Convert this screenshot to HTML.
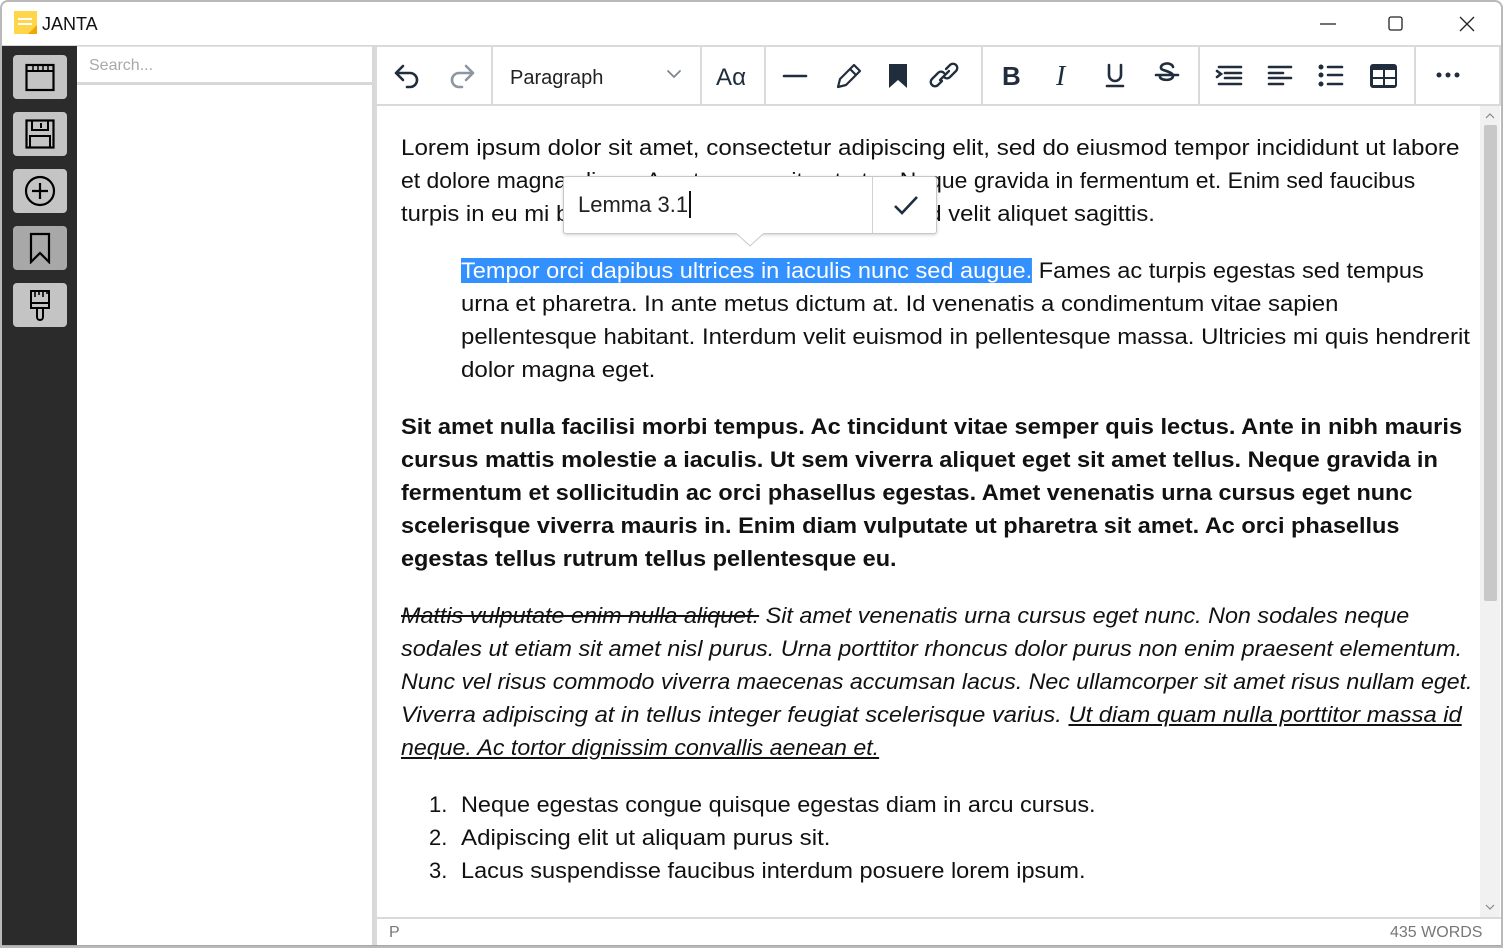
<!DOCTYPE html>
<html><head><meta charset="utf-8">
<style>
*{margin:0;padding:0;box-sizing:border-box}
html,body{width:1503px;height:948px;overflow:hidden;background:#fff;font-family:"Liberation Sans",sans-serif}
.win{position:absolute;left:0;top:0;width:1503px;height:948px;overflow:hidden;background:#fff}
.frame{position:absolute;left:0;top:0;width:1503px;height:948px;border:2px solid #b9b9b9;border-radius:8px 8px 0 0;pointer-events:none}
.abs{position:absolute}
.side{left:0;top:44px;width:77px;height:904px;background:#2b2b2b}
.sbtn{position:absolute;left:13px;width:54px;height:44px;background:#c4c4c4;border-radius:4px;display:flex;align-items:center;justify-content:center}
.search{left:77px;top:44px;width:298px;height:904px;background:#fff;border-right:3px solid #d8d8d8}
.edit{left:375px;top:45px;width:1126px;height:903px}
.tb{position:absolute;top:0;height:61px;border-left:2px solid #dadada;border-top:2px solid #dadada;border-bottom:2px solid #dadada}
.ln{position:absolute;white-space:nowrap;font-size:22px;line-height:33px;height:33px;color:#111;transform-origin:0 50%}
.b{font-weight:bold}.i{font-style:italic}
svg{display:block}
</style></head><body><div class="win">
<div class="abs" style="left:14px;top:11px;width:24px;height:24px">
<svg width="24" height="24"><rect x="0" y="0" width="23" height="23" fill="#ffd54a"/><polygon points="14,23 23,14 23,23" fill="#f0a800"/><rect x="4" y="7" width="14" height="2" fill="#fff"/><rect x="4" y="12" width="14" height="2" fill="#fff"/></svg></div>
<div class="abs" style="left:42px;top:14px;font-size:18px;color:#111">JANTA</div>
<svg class="abs" style="left:1318px;top:15px" width="170" height="20"><line x1="2" y1="9" x2="18" y2="9" stroke="#222" stroke-width="1.3"/><rect x="71" y="2" width="13" height="13" rx="2" fill="none" stroke="#222" stroke-width="1.3"/><path d="M142 2 L156 16 M156 2 L142 16" stroke="#222" stroke-width="1.3"/></svg>
<div class="abs" style="left:0;top:45px;width:1503px;height:1px;background:#d6d6d6"></div>
<div class="abs side" style="top:46px">
<div class="sbtn" style="top:9px"><svg width="30" height="30"><rect x="1.5" y="3" width="27" height="25" fill="none" stroke="#000" stroke-width="2.2"/><line x1="1.5" y1="9" x2="28.5" y2="9" stroke="#000" stroke-width="2"/><path d="M8 4v4M13 4v4M18 4v4M23 4v4" stroke="#000" stroke-width="1.5"/></svg></div>
<div class="sbtn" style="top:66px"><svg width="30" height="30"><rect x="1.5" y="1.5" width="27" height="27" fill="none" stroke="#000" stroke-width="2.2"/><path d="M7 2v9h16V2M16 4v5" fill="none" stroke="#000" stroke-width="2"/><path d="M5 28V17h20v11" fill="none" stroke="#000" stroke-width="2"/></svg></div>
<div class="sbtn" style="top:123px"><svg width="32" height="32"><circle cx="16" cy="16" r="14" fill="none" stroke="#000" stroke-width="2.2"/><path d="M16 8v16M8 16h16" stroke="#000" stroke-width="2.2"/></svg></div>
<div class="sbtn" style="top:180px;background:#a8a8a8"><svg width="30" height="32"><path d="M6 2h18v28l-9-9-9 9z" fill="none" stroke="#000" stroke-width="2.2"/></svg></div>
<div class="sbtn" style="top:237px"><svg width="30" height="32"><path d="M6 2h18v12H6z M6 14v5h18v-5 M12 19v9a3 3 0 0 0 6 0v-9" fill="none" stroke="#000" stroke-width="2"/><path d="M10 2v6M14 2v4M18 2v6M22 2v3" stroke="#000" stroke-width="1.6"/></svg></div>
</div>
<div class="abs search" style="top:46px">
<div class="abs" style="left:0;top:0;width:295px;height:39px;border-bottom:3px solid #d8d8d8;border-top:1px solid #e4e4e4"></div>
<div class="abs" style="left:12px;top:11px;font-size:16px;color:#a9a9a9">Search...</div>
</div>
<div class="abs edit">
<div class="tb" style="left:0;width:117px"></div>
<div class="tb" style="left:116px;width:210px"></div>
<div class="tb" style="left:325px;width:66px"></div>
<div class="tb" style="left:389px;width:218px"></div>
<div class="tb" style="left:606px;width:218px"></div>
<div class="tb" style="left:823px;width:217px"></div>
<div class="tb" style="left:1039px;width:87px;border-right:2px solid #dadada"></div>
<svg class="abs" style="left:0;top:0" width="1126" height="62">
<g fill="none" stroke="#1f2d3d" stroke-width="2.6" stroke-linecap="round" stroke-linejoin="round">
<path d="M28 21l-7 7 7 7M21 28h14a7 7 0 0 1 0 14h-3"/>
<path stroke="#8b96a0" d="M91 21l7 7-7 7M98 28H84a7 7 0 0 0 0 14h3"/>
<path stroke="#7d8790" stroke-width="1.8" d="M293 26l6 6 6-6"/>
<path d="M409 31h22"/>
<path stroke-width="2.2" d="M463 42l2-8 14-14 6 6-14 14zM475 24l6 6"/>
<path stroke-width="2.3" d="M567 36l-4 4a4 4 0 0 1-6-6l6-6a4 4 0 0 1 6 0M571 24l4-4a4 4 0 0 1 6 6l-6 6a4 4 0 0 1-6 0M565 35l9-9"/>
</g>
<path d="M514 19h18v24l-9-8-9 8z" fill="#1f2d3d"/>
<text x="135" y="39" font-family="Liberation Sans" font-size="20" fill="#222">Paragraph</text>
<text x="341" y="40" font-family="Liberation Sans" font-size="24" fill="#1f2d3d" textLength="30" lengthAdjust="spacingAndGlyphs">Aα</text>
<text x="627" y="40" font-family="Liberation Sans" font-size="26" font-weight="bold" fill="#1f2d3d">B</text>
<text x="681" y="40" font-family="Liberation Serif" font-size="28" font-style="italic" fill="#1f2d3d">I</text>
<g fill="none" stroke="#1f2d3d" stroke-width="2.6" stroke-linecap="round">
<path d="M734 20v10a6 6 0 0 0 12 0v-10M732 41h16"/>
<path d="M781 30h22M798 22a6 4 0 0 0-12 1c0 3 12 3 12 8s-12 5-13 1"/>
<path d="M844 22h22M850 28h16M850 33h16M844 39h22M842 26l4 3-4 3"/>
<path d="M894 22h22M894 28h14M894 33h22M894 39h14"/>
<path d="M953 22h14M953 30h14M953 39h14"/>
</g>
<g fill="#1f2d3d"><circle cx="946" cy="22" r="2.5"/><circle cx="946" cy="30" r="2.5"/><circle cx="946" cy="39" r="2.5"/>
<rect x="995" y="19" width="27" height="24" rx="3"/>
<circle cx="1064" cy="30" r="2.5"/><circle cx="1073" cy="30" r="2.5"/><circle cx="1082" cy="30" r="2.5"/></g>
<g fill="#fff"><rect x="998" y="25" width="10" height="7"/><rect x="1010" y="25" width="10" height="7"/><rect x="998" y="34" width="10" height="6"/><rect x="1010" y="34" width="10" height="6"/></g>
</svg>
<div class="abs" style="left:1105px;top:61px;width:20px;height:812px;background:#f1f1f1"></div>
<div class="abs" style="left:1109px;top:80px;width:13px;height:476px;background:#c8c8c8;border-radius:2px"></div>
<svg class="abs" style="left:1105px;top:61px" width="20" height="812"><path d="M6 12l4-4 4 4" fill="none" stroke="#888" stroke-width="1.2"/><path d="M6 799l4 4 4-4" fill="none" stroke="#888" stroke-width="1.2"/></svg>
<div class="abs" style="left:0;top:872px;width:1126px;height:2px;background:#dadada"></div>
<div class="abs" style="left:0;top:61px;width:2px;height:842px;background:#dadada"></div>
<div class="abs" style="left:14px;top:879px;font-size:16px;color:#777">P</div>
<div class="abs" style="left:1015px;top:879px;font-size:16px;color:#777">435 WORDS</div>
</div>
<div class="abs" style="left:0;top:945px;width:1503px;height:3px;background:#a8a8a8"></div>

<div id="txt">
<div class="ln" style="left:401px;top:131px" w="1058">Lorem ipsum dolor sit amet, consectetur adipiscing elit, sed do eiusmod tempor incididunt ut labore</div>
<div class="ln" style="left:401px;top:164px" w="1014">et dolore magna aliqua. Amet massa vitae tortor. Neque gravida in fermentum et. Enim sed faucibus</div>
<div class="ln" style="left:401px;top:197px" w="754">turpis in eu mi bibendum neque egestas congue. Id velit aliquet sagittis.</div>
<div class="ln" style="left:461px;top:254px" w="963"><span style="background:#3391ff;color:#fff">Tempor orci dapibus ultrices in iaculis nunc sed augue.</span> Fames ac turpis egestas sed tempus</div>
<div class="ln" style="left:461px;top:287px" w="877">urna et pharetra. In ante metus dictum at. Id venenatis a condimentum vitae sapien</div>
<div class="ln" style="left:461px;top:320px" w="1009">pellentesque habitant. Interdum velit euismod in pellentesque massa. Ultricies mi quis hendrerit</div>
<div class="ln" style="left:461px;top:353px" w="194">dolor magna eget.</div>
<div class="ln b" style="left:401px;top:410px" w="1061">Sit amet nulla facilisi morbi tempus. Ac tincidunt vitae semper quis lectus. Ante in nibh mauris</div>
<div class="ln b" style="left:401px;top:443px" w="1037">cursus mattis molestie a iaculis. Ut sem viverra aliquet eget sit amet tellus. Neque gravida in</div>
<div class="ln b" style="left:401px;top:476px" w="1011">fermentum et sollicitudin ac orci phasellus egestas. Amet venenatis urna cursus eget nunc</div>
<div class="ln b" style="left:401px;top:509px" w="999">scelerisque viverra mauris in. Enim diam vulputate ut pharetra sit amet. Ac orci phasellus</div>
<div class="ln b" style="left:401px;top:542px" w="496">egestas tellus rutrum tellus pellentesque eu.</div>
<div class="ln i" style="left:401px;top:599px" w="1008"><s>Mattis vulputate enim nulla aliquet.</s> Sit amet venenatis urna cursus eget nunc. Non sodales neque</div>
<div class="ln i" style="left:401px;top:632px" w="1061">sodales ut etiam sit amet nisl purus. Urna porttitor rhoncus dolor purus non enim praesent elementum.</div>
<div class="ln i" style="left:401px;top:665px" w="1072">Nunc vel risus commodo viverra maecenas accumsan lacus. Nec ullamcorper sit amet risus nullam eget.</div>
<div class="ln i" style="left:401px;top:698px" w="1061">Viverra adipiscing at in tellus integer feugiat scelerisque varius. <u>Ut diam quam nulla porttitor massa id </u></div>
<div class="ln i" style="left:401px;top:731px" w="478"><u>neque. Ac tortor dignissim convallis aenean et.</u></div>
<div class="ln" style="left:429px;top:788px">1.</div>
<div class="ln" style="left:429px;top:821px">2.</div>
<div class="ln" style="left:429px;top:854px">3.</div>
<div class="ln" style="left:461px;top:788px" w="635">Neque egestas congue quisque egestas diam in arcu cursus.</div>
<div class="ln" style="left:461px;top:821px" w="370">Adipiscing elit ut aliquam purus sit.</div>
<div class="ln" style="left:461px;top:854px" w="625">Lacus suspendisse faucibus interdum posuere lorem ipsum.</div>
</div>

<div class="abs" style="left:563px;top:176px;width:374px;height:58px;background:#fff;border:1px solid #c8c8c8;border-radius:3px;box-shadow:0 1px 3px rgba(0,0,0,.18)">
<div class="abs" style="left:308px;top:0;width:1px;height:56px;background:#d0d0d0"></div>
<div class="abs" style="left:14px;top:14px;font-size:22px;color:#222">Lemma 3.1<span style="display:inline-block;width:1.5px;height:27px;background:#111;vertical-align:-6px;margin-left:1px"></span></div>
<svg class="abs" style="left:328px;top:17px" width="28" height="24"><path d="M3 12l7 7L25 3" fill="none" stroke="#1f2d3d" stroke-width="2.6"/></svg>
</div>
<svg class="abs" style="left:737px;top:233px" width="26" height="14"><path d="M0 1L13 13L26 1" fill="#fff" stroke="#c8c8c8" stroke-width="1"/><rect x="0" y="0" width="26" height="1" fill="#fff"/></svg>
<div class="frame"></div>
</div>
<script>
document.querySelectorAll('#txt .ln').forEach(function(e){var w=e.getAttribute('w');if(!w)return;var a=e.scrollWidth;if(a>0)e.style.transform='scaleX('+(w/a)+')';});
</script>
</body></html>
